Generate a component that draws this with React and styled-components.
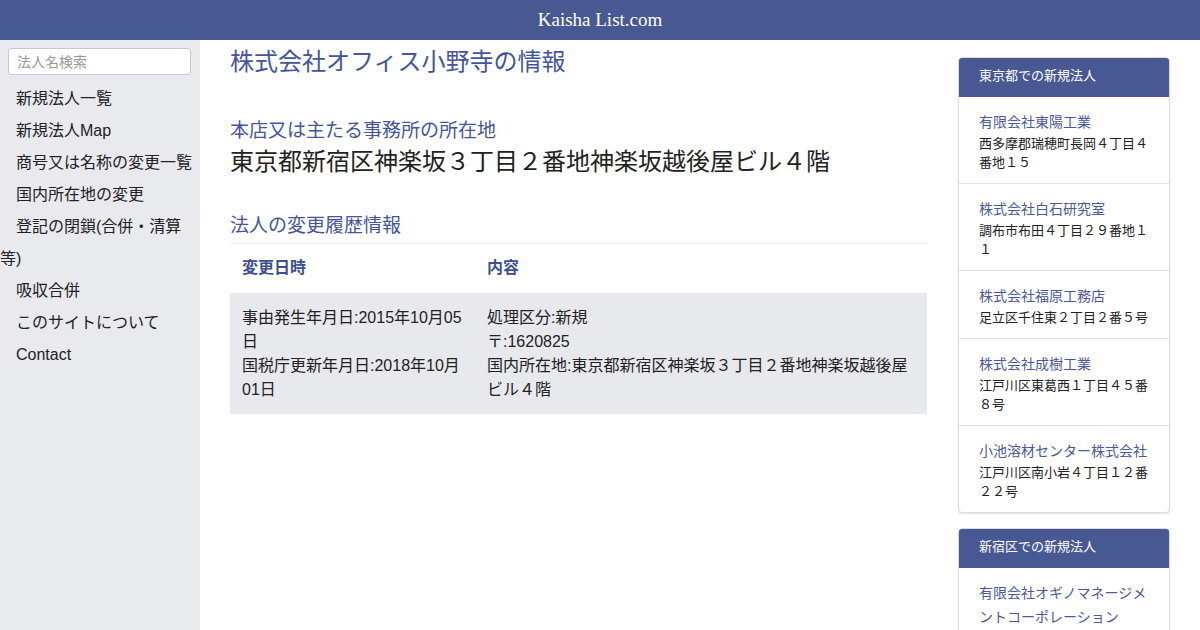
import React from 'react';
import styled, { createGlobalStyle } from 'styled-components';

const GlobalStyle = createGlobalStyle`
  body {
    margin: 0;
    font-family: "Liberation Sans", "Noto Sans CJK JP", sans-serif;
    color: #222;
    background: #fff;
  }
  * { box-sizing: border-box; }
`;

const navItems = [
  '新規法人一覧',
  '新規法人Map',
  '商号又は名称の変更一覧',
  '国内所在地の変更',
  '登記の閉鎖(合併・清算等)',
  '吸収合併',
  'このサイトについて',
  'Contact',
];

const panels = [
  {
    title: '東京都での新規法人',
    items: [
      { name: '有限会社東陽工業', addr: '西多摩郡瑞穂町長岡４丁目４番地１５' },
      { name: '株式会社白石研究室', addr: '調布市布田４丁目２９番地１１' },
      { name: '株式会社福原工務店', addr: '足立区千住東２丁目２番５号' },
      { name: '株式会社成樹工業', addr: '江戸川区東葛西１丁目４５番８号' },
      { name: '小池溶材センター株式会社', addr: '江戸川区南小岩４丁目１２番２２号' },
    ],
  },
  {
    title: '新宿区での新規法人',
    items: [{ name: '有限会社オギノマネージメントコーポレーション', addr: '' }],
  },
];

function App() {
  return (
    <>
      <GlobalStyle />
      <TopBar>Kaisha List.com</TopBar>
      <Layout>
        <Sidebar>
          <Search placeholder="法人名検索" />
          <Nav>
            {navItems.map((item) => (
              <NavItem key={item}>
                <a href="#">{item}</a>
              </NavItem>
            ))}
          </Nav>
        </Sidebar>
        <Main>
          <Title>株式会社オフィス小野寺の情報</Title>
          <SectionHeading>本店又は主たる事務所の所在地</SectionHeading>
          <Address>東京都新宿区神楽坂３丁目２番地神楽坂越後屋ビル４階</Address>
          <SectionHeading $ruled>法人の変更履歴情報</SectionHeading>
          <Table>
            <thead>
              <tr>
                <Th style={{ width: 245 }}>変更日時</Th>
                <Th>内容</Th>
              </tr>
            </thead>
            <tbody>
              <Row>
                <Td>
                  事由発生年月日:2015年10月05日
                  <br />
                  国税庁更新年月日:2018年10月01日
                </Td>
                <Td>
                  処理区分:新規
                  <br />
                  〒:1620825
                  <br />
                  国内所在地:東京都新宿区神楽坂３丁目２番地神楽坂越後屋ビル４階
                </Td>
              </Row>
            </tbody>
          </Table>
        </Main>
        <Aside>
          {panels.map((panel) => (
            <Panel key={panel.title}>
              <PanelHead>{panel.title}</PanelHead>
              {panel.items.map((it) => (
                <PanelItem key={it.name}>
                  <ItemName href="#">{it.name}</ItemName>
                  {it.addr && <ItemAddr>{it.addr}</ItemAddr>}
                </PanelItem>
              ))}
            </Panel>
          ))}
        </Aside>
      </Layout>
    </>
  );
}

export default App;

const TopBar = styled.header`
  height: 40px;
  background: #485892;
  color: #fff;
  font-family: "Liberation Serif", "DejaVu Serif", serif;
  font-size: 19px;
  line-height: 40px;
  text-align: center;
`;

const Layout = styled.div`
  display: flex;
  min-height: calc(100vh - 40px);
`;

const Sidebar = styled.nav`
  width: 200px;
  flex-shrink: 0;
  background: #e9eaee;
  padding: 8px 9px 8px 8px;
`;

const Search = styled.input`
  display: block;
  width: 183px;
  height: 27px;
  padding: 0 8px;
  border: 1px solid #c8c9cf;
  border-radius: 3px;
  font-family: inherit;
  font-size: 14px;
  color: #333;
  &::placeholder { color: #999; }
`;

const Nav = styled.ul`
  list-style: none;
  margin: 8px -9px 0 -8px;
  padding: 0;
`;

const NavItem = styled.li`
  font-size: 16px;
  line-height: 32px;

  a {
    padding: 0 8px 0 16px;
    color: #222;
    text-decoration: none;
  }
`;

const Main = styled.main`
  flex: 1;
  min-width: 0;
  padding: 0 31px 0 30px;
`;

const Title = styled.h1`
  margin: 7px 0 0;
  font-size: 24px;
  line-height: 30px;
  font-weight: normal;
  color: #44559a;
`;

const SectionHeading = styled.h2`
  margin: ${(p) => (p.$ruled ? '34px 0 0' : '42px 0 0')};
  font-size: 19px;
  line-height: 24px;
  font-weight: normal;
  color: #44559a;
  padding-bottom: ${(p) => (p.$ruled ? '5px' : '0')};
  border-bottom: ${(p) => (p.$ruled ? '1px solid #eceef1' : 'none')};
`;

const Address = styled.p`
  margin: 1px 0 0;
  font-size: 24px;
  line-height: 36px;
  color: #222;
`;

const Table = styled.table`
  width: 100%;
  border-collapse: collapse;
  font-size: 16px;
  line-height: 24px;
`;

const Th = styled.th`
  text-align: left;
  padding: 12px 12px 13px;
  color: #3e4f8f;
  font-weight: bold;
`;

const Row = styled.tr`
  background: #e8e9ed;
`;

const Td = styled.td`
  padding: 13px 12px 12px;
  vertical-align: top;
  color: #222;
`;

const Aside = styled.aside`
  width: 212px;
  flex-shrink: 0;
  margin-right: 30px;
  padding-top: 17px;
`;

const Panel = styled.section`
  border: 1px solid #dcdde2;
  border-radius: 4px;
  overflow: hidden;
  margin-bottom: 15px;
  background: #fff;
  box-shadow: 0 1px 2px rgba(0, 0, 0, 0.12);
`;

const PanelHead = styled.div`
  margin: -1px -1px 0;
  background: #485892;
  color: #fff;
  font-size: 13px;
  line-height: 38px;
  padding: 0 21px 2px;
`;

const PanelItem = styled.div`
  padding: 13px 20px 11px;
  border-bottom: 1px solid #e0e1e5;
  &:last-child { border-bottom: none; }
`;

const ItemName = styled.a`
  display: block;
  font-size: 14px;
  line-height: 24px;
  color: #4a5a98;
  text-decoration: none;
`;

const ItemAddr = styled.div`
  font-size: 13px;
  line-height: 19px;
  color: #222;
`;
